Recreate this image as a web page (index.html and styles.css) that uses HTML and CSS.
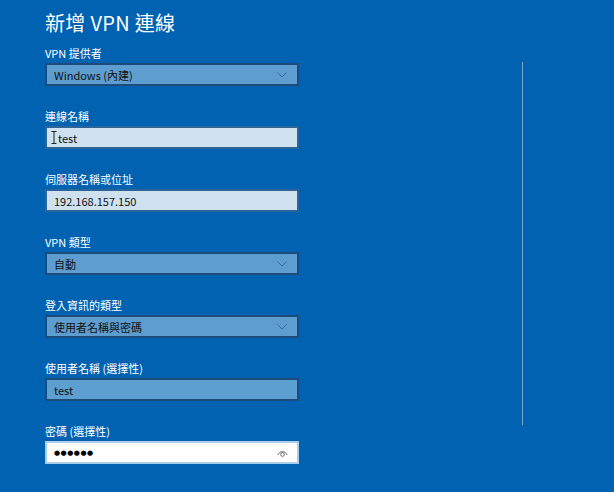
FILE: index.html
```html
<!DOCTYPE html>
<html lang="zh-Hant">
<head>
<meta charset="utf-8">
<link rel="stylesheet" href="styles.css">
</head>
<body>
<div class="page">
  <main class="form">
    <h1 class="title">新增 VPN 連線</h1>

    <div class="field">
      <div class="label">VPN 提供者</div>
      <div class="box select"><span>Windows (內建)</span>
        <svg class="chev" width="10" height="6" viewBox="0 0 10 6"><path d="M0.5 0.5 L5 5 L9.5 0.5" fill="none" stroke="#3a6a98" stroke-width="1"/></svg>
      </div>
    </div>

    <div class="field">
      <div class="label">連線名稱</div>
      <div class="box text light">
        <svg class="ibeam" width="6" height="13" viewBox="0 0 6 13"><path d="M0.5 0.5 H5.5 M3 0.5 V12.5 M0.5 12.5 H5.5" fill="none" stroke="#222" stroke-width="1"/></svg><span>test</span>
      </div>
    </div>

    <div class="field">
      <div class="label">伺服器名稱或位址</div>
      <div class="box text light"><span>192.168.157.150</span></div>
    </div>

    <div class="field">
      <div class="label">VPN 類型</div>
      <div class="box select"><span>自動</span>
        <svg class="chev" width="10" height="6" viewBox="0 0 10 6"><path d="M0.5 0.5 L5 5 L9.5 0.5" fill="none" stroke="#3a6a98" stroke-width="1"/></svg>
      </div>
    </div>

    <div class="field">
      <div class="label">登入資訊的類型</div>
      <div class="box select"><span>使用者名稱與密碼</span>
        <svg class="chev" width="10" height="6" viewBox="0 0 10 6"><path d="M0.5 0.5 L5 5 L9.5 0.5" fill="none" stroke="#3a6a98" stroke-width="1"/></svg>
      </div>
    </div>

    <div class="field">
      <div class="label">使用者名稱 (選擇性)</div>
      <div class="box text mid"><span>test</span></div>
    </div>

    <div class="field">
      <div class="label">密碼 (選擇性)</div>
      <div class="box text focus"><span class="dots">●●●●●●</span>
        <svg class="eye" width="11" height="8" viewBox="0 0 11 8"><path d="M0.8 6 C2.5 1.5 8.5 1.5 10.2 6" fill="none" stroke="#666" stroke-width="1"/><circle cx="5.5" cy="5.5" r="1.8" fill="none" stroke="#666" stroke-width="1"/></svg>
      </div>
    </div>
  </main>
  <div class="scroll"></div>
</div>
</body>
</html>
```
FILE: styles.css
```css
html, body {
  margin: 0;
  padding: 0;
  background: #0062b1;
  height: 100%;
  overflow: hidden;
}
body {
  font-family: "Noto Sans CJK TC", "Noto Sans", sans-serif;
  color: #fff;
}
.page {
  display: flex;
  padding-left: 45px;
}
.form {
  width: 254px;
  display: flex;
  flex-direction: column;
  gap: 21px;
}
.title {
  margin: 9px 0 -14px 0;
  font-size: 20px;
  font-weight: 400;
  line-height: 28px;
  letter-spacing: 0.3px;
}
.field {
  display: flex;
  flex-direction: column;
  gap: 1px;
}
.label {
  font-size: 11px;
  line-height: 18px;
  height: 18px;
}
.box {
  box-sizing: border-box;
  height: 23px;
  display: flex;
  align-items: center;
  padding: 0 8px 0 7px;
  font-size: 11px;
  color: #111;
  border: 2px solid #1d4c7c;
}
.select {
  background: #5d9dcf;
  justify-content: space-between;
}
.select .chev { margin-right: 2px; }
.light {
  background: #cfe1ef;
  border-color: #2c6596;
  padding-left: 4px;
}
.ibeam { margin-right: 1px; }
.light:not(:has(.ibeam)) { padding-left: 7px; }
.mid {
  background: #5d9fd0;
  border-color: #1d4c7c;
}
.focus {
  background: #fff;
  border-color: #a9cdea;
  justify-content: space-between;
}
.dots {
  font-family: "DejaVu Sans", sans-serif;
  font-size: 7px;
  letter-spacing: 0.5px;
  color: #000;
}
.eye { margin-right: 1px; }
.scroll {
  margin-top: 62px;
  margin-left: 223px;
  width: 1px;
  height: 363px;
  background: #7fa6c8;
}
```
